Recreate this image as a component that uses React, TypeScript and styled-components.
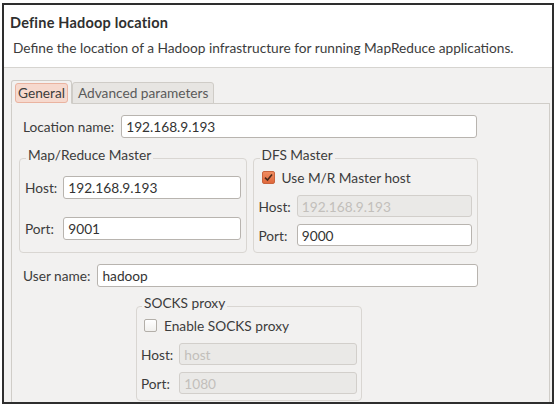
import styled, { createGlobalStyle } from 'styled-components'

const GlobalStyle = createGlobalStyle`
  html, body {
    margin: 0;
    padding: 0;
    background: #ffffff;
  }
  body {
    font-family: Lato, 'Liberation Sans', sans-serif;
    font-size: 13.7px;
    color: #3c3c3c;
  }
`

const Frame = styled.div`
  box-sizing: border-box;
  margin: 3px 0 0 2px;
  width: 552px;
  height: 401px;
  border: 2px solid #2e2e2e;
  overflow: hidden;
  display: flex;
  flex-direction: column;
`

const Header = styled.div`
  background: #ffffff;
  height: 63px;
  flex: none;
  border-bottom: 1px solid #d6d4d0;
  padding: 9px 0 0 6px;
  box-sizing: border-box;
`

const Title = styled.div`
  font-weight: 700;
  font-size: 14.5px;
  letter-spacing: 0.2px;
  color: #2f2f2f;
  line-height: 17px;
`

const Description = styled.div`
  margin: 9px 0 0 3px;
  line-height: 16px;
`

const Body = styled.div`
  flex: 1;
  background: #f2f1f0;
  padding: 12px 2px 0 7px;
`

const Tabs = styled.div`
  display: flex;
  align-items: flex-end;
`

const Tab = styled.div<{ $active?: boolean }>`
  box-sizing: border-box;
  height: ${({ $active }) => ($active ? '24px' : '22px')};
  padding: ${({ $active }) => ($active ? '2px 3px 0' : '0 5px')};
  margin-bottom: -1px;
  border: 1px solid #cfccc7;
  border-bottom: ${({ $active }) => ($active ? '1px solid #f2f1f0' : '1px solid #cfccc7')};
  border-radius: 3px 3px 0 0;
  background: ${({ $active }) => ($active ? '#f2f1f0' : '#e7e5e2')};
  color: ${({ $active }) => ($active ? '#3c3c3c' : '#5a5a5a')};
  line-height: 20px;
  position: relative;
  z-index: ${({ $active }) => ($active ? 1 : 0)};
`

const TabFocus = styled.span`
  display: block;
  padding: 0 2px;
  line-height: 18px;
  border: 1px solid #eab3a0;
  border-radius: 3px;
  background: #f6d9ce;
`

const Panel = styled.div`
  border: 1px solid #d0cdc8;
  background: #f2f1f0;
  height: 320px;
  padding: 0 7px;
`

const Row = styled.div<{ $top: number }>`
  display: flex;
  align-items: center;
  gap: 7px;
  margin-top: ${({ $top }) => $top}px;
  padding-left: 4px;
`

const Label = styled.span`
  white-space: nowrap;
`

const Input = styled.input<{ $width: number; $height?: number }>`
  box-sizing: border-box;
  width: ${({ $width }) => $width}px;
  height: ${({ $height }) => $height ?? 23}px;
  margin: 0;
  padding: 0 4px;
  border: 1px solid #b8b4af;
  border-radius: 3px;
  background: #ffffff;
  font: inherit;
  color: #333333;
  outline: none;

  &:disabled {
    background: #eae9e7;
    border-color: #d2cfcb;
    color: #c2bfbb;
  }
`

const GroupRow = styled.div`
  display: flex;
  gap: 6px;
  margin-top: 9px;
  width: 459px;
`

const Group = styled.fieldset<{ $width: number; $pad: string }>`
  box-sizing: border-box;
  width: ${({ $width }) => $width}px;
  margin: 0;
  padding: ${({ $pad }) => $pad};
  border: 1px solid #d9d6d2;
  border-radius: 4px;
  min-width: 0;
`

const Legend = styled.legend`
  padding: 0 2px 7px;
  margin-left: 1px;
  line-height: 15px;
  color: #3c3c3c;
`

const FieldGrid = styled.div<{ $gap: number }>`
  display: grid;
  grid-template-columns: auto 1fr;
  align-items: center;
  column-gap: 6px;
  row-gap: ${({ $gap }) => $gap}px;
`

const CheckRow = styled.label`
  display: flex;
  align-items: center;
  gap: 7px;
  height: 18px;
  margin: -1px 0 9px 3px;
`

const Box = styled.span<{ $checked?: boolean }>`
  box-sizing: border-box;
  width: 13px;
  height: 13px;
  border-radius: 2px;
  border: 1px solid ${({ $checked }) => ($checked ? '#c8643e' : '#b3afa9')};
  background: ${({ $checked }) =>
    $checked ? 'linear-gradient(#f08c60, #e0683c)' : 'linear-gradient(#ffffff, #f1f0ee)'};
  display: flex;
  align-items: center;
  justify-content: center;
`

function Check({ checked }: { checked?: boolean }) {
  return (
    <Box $checked={checked}>
      {checked && (
        <svg width="9" height="9" viewBox="0 0 9 9">
          <path d="M1 4.6 L3.5 7 L8 1.6" fill="none" stroke="#4a2a1c" strokeWidth="1.6" />
        </svg>
      )}
    </Box>
  )
}

const Socks = styled(Group)`
  margin: 8px 0 0 117px;
`

export default function App() {
  return (
    <>
      <GlobalStyle />
      <Frame>
        <Header>
          <Title>Define Hadoop location</Title>
          <Description>
            Define the location of a Hadoop infrastructure for running MapReduce applications.
          </Description>
        </Header>
        <Body>
          <Tabs>
            <Tab $active>
              <TabFocus>General</TabFocus>
            </Tab>
            <Tab>Advanced parameters</Tab>
          </Tabs>
          <Panel>
            <Row $top={11}>
              <Label>Location name:</Label>
              <Input $width={356} defaultValue="192.168.9.193" />
            </Row>

            <GroupRow>
              <Group $width={228} $pad="7px 6px 10px 5px">
                <Legend>Map/Reduce Master</Legend>
                <FieldGrid $gap={18}>
                  <Label>Host:</Label>
                  <Input $width={178} defaultValue="192.168.9.193" />
                  <Label>Port:</Label>
                  <Input $width={178} defaultValue="9001" />
                </FieldGrid>
              </Group>
              <Group $width={226} $pad="0 6px 6px 5px">
                <Legend>DFS Master</Legend>
                <CheckRow>
                  <Check checked />
                  <span>Use M/R Master host</span>
                </CheckRow>
                <FieldGrid $gap={7}>
                  <Label>Host:</Label>
                  <Input $width={175} $height={22} disabled defaultValue="192.168.9.193" />
                  <Label>Port:</Label>
                  <Input $width={175} $height={22} defaultValue="9000" />
                </FieldGrid>
              </Group>
            </GroupRow>

            <Row $top={11}>
              <Label>User name:</Label>
              <Input $width={381} defaultValue="hadoop" />
            </Row>

            <Socks $width={226} $pad="0 5px 6px 4px">
              <Legend>SOCKS proxy</Legend>
              <CheckRow>
                <Check />
                <span>Enable SOCKS proxy</span>
              </CheckRow>
              <FieldGrid $gap={7}>
                <Label>Host:</Label>
                <Input $width={178} $height={22} disabled defaultValue="host" />
                <Label>Port:</Label>
                <Input $width={178} $height={22} disabled defaultValue="1080" />
              </FieldGrid>
            </Socks>
          </Panel>
        </Body>
      </Frame>
    </>
  )
}
